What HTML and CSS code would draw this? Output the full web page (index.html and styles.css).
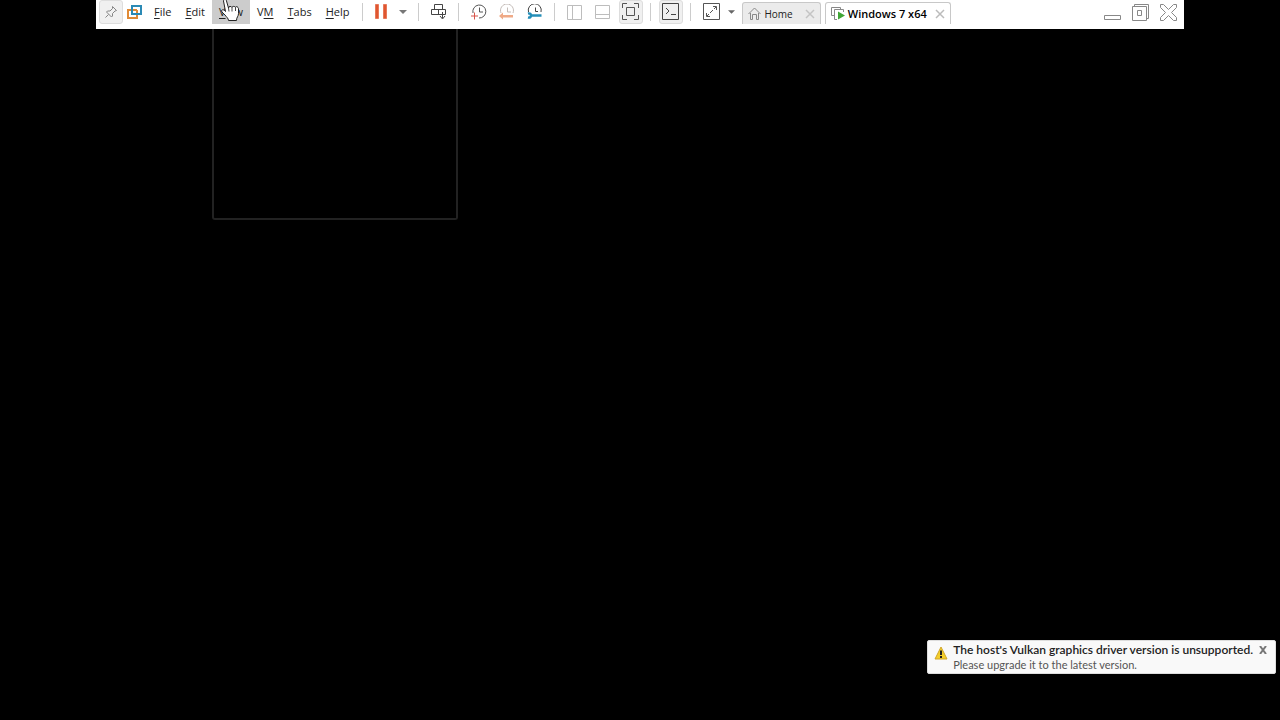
FILE: index.html
```html
<!DOCTYPE html>
<html lang="en">
<head>
    <meta charset="UTF-8">
    <title>Windows 7 x64 - Workstation</title>
    <link rel="stylesheet" href="styles.css">
</head>
<body>
    <header class="toolbar">
        <button class="tool pinned" aria-label="Pin toolbar">
            <svg width="16" height="16" viewBox="0 0 16 16" fill="none" stroke="#858585"><path d="M9.500 2.500l4 4-1.500.5-2.500 2.500v2.500l-1 1-5-5 1-1h2.500l2.500-2.500zM5.500 10.500l-3 3"/></svg>
        </button>
        <svg class="logo" width="16" height="16" viewBox="0 0 16 16" fill="none" stroke-width="2"><path d="M5 10V2h9v8H5" stroke="#2b8ab5"/><path d="M10 6H1v8h9V6" stroke="#e08a35"/><path d="M5 5v5h6" stroke="#2b8ab5"/></svg>
        <nav class="menu">
            <button class="menu-item"><u>F</u>ile</button>
            <button class="menu-item"><u>E</u>dit</button>
            <div class="menu-open">
                <button class="menu-item active"><u>V</u>iew</button>
                <div class="dropdown"></div>
                <svg class="pointer" width="20" height="24" viewBox="0 0 20 24"><path d="M3.500 1c0-2 3-2 3 0l2 7c0-2 3-2 3.500-.5 0-1.500 3-1.500 3.500 0 0-1.500 2.500-1 3 1v5c0 3-2 3.500-2 7H8.500c0-2-2-3.500-3.500-5.500L2 12c-1.500-2 1-3 2.500-1.500l1 1z" fill="#fff" stroke="#222"/><path d="M8.500 8l.5 3.500M12 7.500v4M15.500 7.500V11" stroke="#444"/></svg>
            </div>
            <button class="menu-item">V<u>M</u></button>
            <button class="menu-item"><u>T</u>abs</button>
            <button class="menu-item"><u>H</u>elp</button>
        </nav>
        <div class="group power">
            <button class="tool small" aria-label="Pause">
                <svg width="12" height="16" viewBox="0 0 12 16" fill="#df5630" stroke="#e8795a"><path d="M.5.500h3v14h-3zM8.500.500h3v14h-3z"/></svg>
            </button>
            <button class="tool arrow" aria-label="Power options">
                <svg width="8" height="4" viewBox="0 0 8 4"><path d="M0 0h8L4 4z" fill="#777"/></svg>
            </button>
        </div>
        <div class="group">
            <button class="tool small" aria-label="Send Ctrl+Alt+Del">
                <svg width="16" height="16" viewBox="0 0 16 16" fill="none" stroke="#444"><path d="M3.500 5.500v-5h8v5M.5 5.500h14v5H.5zM7.500 5.500v5M11.500 8v6M9 12l2.500 3 2.500-3"/></svg>
            </button>
        </div>
        <div class="group">
            <button class="tool small" aria-label="Take snapshot">
                <svg width="16" height="16" viewBox="0 0 16 16" fill="none" stroke="#555"><path d="M2 9A6.500 6.500 0 1 1 8 14M8.500 3.500V8H12"/><path d="M3.500 8.500v7M0 12h7" stroke="#d8554a"/></svg>
            </button>
            <button class="tool small" aria-label="Revert snapshot">
                <svg width="16" height="16" viewBox="0 0 16 16" fill="none" stroke="#c4bcb8"><path d="M2 9A6.500 6.500 0 1 1 14 9M8.500 3.500V8H12"/><path d="M0 12l4-3.500V11h10v2.500H4v2z" fill="#efaa87" stroke="none"/></svg>
            </button>
            <button class="tool small" aria-label="Manage snapshots">
                <svg width="16" height="16" viewBox="0 0 16 16" fill="none" stroke="#444"><path d="M1.500 8A6.500 6.500 0 1 1 14 8M8.500 3.500V7.500H11"/><path d="M1 9.500c4-1 4 5 0 4M4 11.500h10.500" stroke="#248eb8" stroke-width="2.500"/></svg>
            </button>
        </div>
        <div class="group views">
            <button class="tool small" aria-label="Show library">
                <svg width="16" height="16" viewBox="0 0 16 16" fill="none" stroke="#bdbdbd"><path d="M.5 1.500h14v14H.5zM5.500 1.500v14"/></svg>
            </button>
            <button class="tool small" aria-label="Show thumbnails">
                <svg width="16" height="16" viewBox="0 0 16 16" fill="none" stroke="#bdbdbd"><path d="M.5 1.500h14v13H.5zM.5 10.500h14"/></svg>
            </button>
            <button class="tool pressed" aria-label="Full screen">
                <svg width="18" height="18" viewBox="0 0 18 18" fill="none" stroke="#555"><path d="M.5 5V.500H5M12 .500h4.500V5M16.500 12v4.500H12M5 16.500H.5V12M4.500 4.500h8v8h-8z"/></svg>
            </button>
        </div>
        <div class="group console">
            <button class="tool pressed" aria-label="Console view">
                <svg width="18" height="18" viewBox="0 0 18 18" fill="none" stroke="#444"><path d="M.5.500h16v16H.5zM4 5l3 3-3 3M9 11.500h5"/></svg>
            </button>
        </div>
        <div class="group stretch">
            <button class="tool small" aria-label="Stretch guest">
                <svg width="18" height="18" viewBox="0 0 18 18" fill="none" stroke="#555"><path d="M.5.500h16v16H.5zM10 3.500h3.500V7M3.500 10v3.500H7M4 13l2-2M7 10l3-3M11 6l2-2"/></svg>
            </button>
            <button class="tool arrow" aria-label="Stretch options">
                <svg width="7" height="4" viewBox="0 0 8 4"><path d="M0 0h8L4 4z" fill="#666"/></svg>
            </button>
        </div>
        <div class="tabs">
            <div class="tab">
                <svg width="13" height="13" viewBox="0 0 13 13" fill="none" stroke="#888"><path d="M.5 7l6-6 6 6M2.500 6v6.500h2v-5h4v5h2V6"/></svg>
                <button class="tab-name">Home</button>
                <button class="tab-close" aria-label="Close tab"><svg width="10" height="10" viewBox="0 0 10 10" stroke="#c4c4c4" stroke-width="1.500"><path d="M1 1l8 8M9 1L1 9"/></svg></button>
            </div>
            <div class="tab current">
                <svg width="14" height="13" viewBox="0 0 14 13" fill="none" stroke="#888"><path d="M3 8.500H.5v-8h9V3M6 12.500H3.500V2.500h9V5"/><path d="M7 4.500v8L14 8.500z" fill="#3fa535" stroke="none"/></svg>
                <button class="tab-name">Windows 7 x64</button>
                <button class="tab-close" aria-label="Close tab"><svg width="10" height="10" viewBox="0 0 10 10" stroke="#bbb" stroke-width="1.500"><path d="M1 1l8 8M9 1L1 9"/></svg></button>
            </div>
        </div>
        <div class="window-buttons">
            <button class="tool small" aria-label="Minimize">
                <svg width="17" height="17" viewBox="0 0 17 17" fill="none" stroke="#888"><path d="M.5 11.500h16v4H.5z"/></svg>
            </button>
            <button class="tool small" aria-label="Restore">
                <svg width="17" height="17" viewBox="0 0 17 17" fill="none" stroke="#888"><path d="M.5 2.500h14v14H.5zM2.500 2V.500h14v14H15M5.500 6.500h4v5h-4z"/></svg>
            </button>
            <button class="tool small" aria-label="Close">
                <svg width="17" height="17" viewBox="0 0 17 17" fill="none" stroke="#888"><path d="M.5.500h3l5 5 5-5h3v3l-5 5 5 5v3h-3l-5-5-5 5h-3v-3l5-5-5-5z"/></svg>
            </button>
        </div>
    </header>

    <main class="guest"></main>

    <div class="notice" role="alert">
        <svg class="warning" width="14" height="14" viewBox="0 0 14 14"><path d="M7 1l6 12H1z" fill="#f5cf2b" stroke="#cfa52a" stroke-linejoin="round"/><path d="M7 4.500V9M7 10v2" stroke="#222" stroke-width="2"/></svg>
        <div class="notice-text">
            <strong>The host's Vulkan graphics driver version is unsupported.</strong>
            <p>Please upgrade it to the latest version.</p>
        </div>
        <button class="notice-close" aria-label="Dismiss"><svg width="8" height="8" viewBox="0 0 8 8" stroke="#777" stroke-width="2"><path d="M1 0l6 8M7 0L1 8"/></svg></button>
    </div>
</body>
</html>
```
FILE: styles.css
```css
body {
    margin: 0;
    min-height: 100vh;
    display: flex;
    flex-direction: column;
    background-color: #000;
    font-family: "Open Sans", "Noto Sans", sans-serif;
    font-size: 11px;
    color: #222;
}
button {
    font: inherit;
    color: inherit;
    background: none;
    border: none;
    margin: 0;
    padding: 0;
}
svg {
    display: block;
    flex: none;
}
.toolbar {
    width: 85%;
    height: 29px;
    margin: 0 auto;
    box-sizing: border-box;
    padding: 0 7px 5px 3px;
    display: flex;
    align-items: center;
    background-color: #fff;
}
.tool {
    flex: none;
    width: 24px;
    height: 24px;
    box-sizing: border-box;
    display: flex;
    align-items: center;
    justify-content: center;
}
.small {
    width: auto;
}
.arrow {
    width: 8px;
}
.pinned,
.pressed {
    background-color: #f0f0f0;
    border: 1px solid #ddd;
    border-radius: 3px;
}
.logo {
    margin: 0 4px;
}
.menu {
    display: flex;
}
.menu-item {
    height: 24px;
    padding: 0 7px;
    line-height: 24px;
}
.menu-item u {
    text-decoration-thickness: 1px;
    text-decoration-skip-ink: none;
    text-underline-offset: 2px;
}
.active {
    background-color: #ccc;
}
.menu-open {
    position: relative;
}
/* open menu hangs below the bar */
.dropdown {
    position: absolute;
    top: 29px;
    left: 0;
    width: 242px;
    height: 189px;
    border: 2px solid #222;
    border-top: none;
    border-radius: 0 0 3px 3px;
}
.pointer {
    position: absolute;
    top: 0;
    left: 8px;
}
.group {
    display: flex;
    align-items: center;
    gap: 12px;
}
.group::before {
    content: "";
    width: 1px;
    height: 18px;
    background-color: #ccc;
    margin-left: 11px;
}
.power::before {
    margin-left: 6px;
}
.console::before,
.stretch::before {
    margin-left: 7px;
}
.views .pressed {
    margin-left: -4px;
}
.stretch .arrow {
    margin-left: -6px;
}
.console {
    gap: 8px;
}
.tabs {
    display: flex;
    align-self: flex-end;
    gap: 4px;
    margin-left: 7px;
}
.tab {
    height: 22px;
    box-sizing: border-box;
    padding: 0 5px;
    display: flex;
    align-items: center;
    gap: 3px;
    background-color: #ebebeb;
    border: 1px solid #c8c8c8;
    border-bottom: none;
    border-radius: 3px 3px 0 0;
    font-size: 10px;
}
.tab-close {
    margin-left: 9px;
}
.current {
    background-color: #fff;
    font-size: 11px;
    font-weight: 600;
    color: #000;
}
.current .tab-close {
    margin-left: 5px;
}
.window-buttons {
    display: flex;
    gap: 11px;
    margin-left: auto;
}
.guest {
    flex: 1;
}
.notice {
    position: fixed;
    right: 4px;
    bottom: 46px;
    box-sizing: border-box;
    height: 34px;
    padding: 1px 8px 0 6px;
    display: flex;
    gap: 5px;
    background-color: #f9f9f9;
    border: 1px solid #ddd;
    border-radius: 2px;
    font-family: Lato, "Open Sans", sans-serif;
    line-height: 15px;
}
.notice-text strong {
    display: block;
    font-size: 12px;
    font-weight: 600;
}
.notice-text p {
    margin: 0;
    color: #555;
}
.warning {
    margin-top: 4px;
}
.notice-close {
    align-self: flex-start;
    margin: 4px 0 0 1px;
}
```
